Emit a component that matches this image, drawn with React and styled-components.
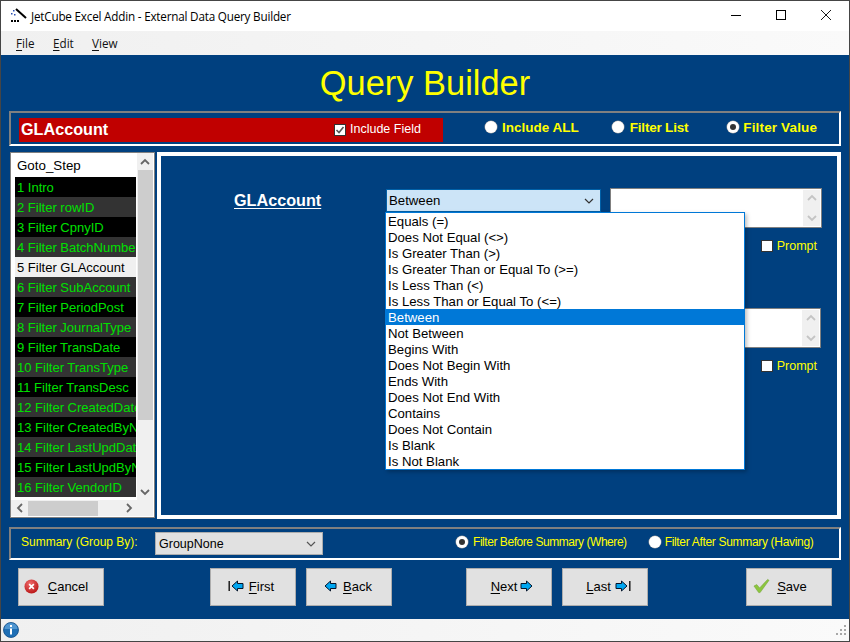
import React from "react";
import styled, { createGlobalStyle } from "styled-components";

const GlobalStyle = createGlobalStyle`
  html, body {
    margin: 0;
    padding: 0;
    background: #fff;
  }
`;

const Window = styled.div`
  width: 850px;
  height: 642px;
  box-sizing: border-box;
  border: 1px solid #454545;
  display: flex;
  flex-direction: column;
  overflow: hidden;
  font-family: "Liberation Sans", Arial, sans-serif;
`;

const TitleBar = styled.div`
  height: 30px;
  flex: none;
  background: #fff;
  display: flex;
  align-items: center;
  padding: 0 1px 0 8px;
  font-family: "Open Sans", sans-serif;
  font-size: 11.7px;
  color: #000;
`;

const TitleText = styled.span`
  margin-left: 4px;
  flex: 1;
  letter-spacing: -0.2px;
`;

const WinButton = styled.div`
  width: 45px;
  height: 30px;
  padding-bottom: 2px;
  box-sizing: border-box;
  display: flex;
  align-items: center;
  justify-content: center;
`;

const MenuBar = styled.div`
  height: 24px;
  flex: none;
  background: linear-gradient(90deg, #f0f0f0, #fafafa);
  display: flex;
  align-items: center;
  padding-left: 15px;
  font-family: "Open Sans", sans-serif;
  font-size: 11.7px;
  color: #111;
`;

const MenuItem = styled.span`
  width: ${(p) => p.$w}px;
  u {
    text-underline-offset: 2px;
  }
`;

const Body = styled.div`
  flex: 1;
  background: #00407f;
  padding: 0 8px;
  display: flex;
  flex-direction: column;
`;

const Heading = styled.h1`
  margin: 0;
  height: 56px;
  flex: none;
  display: flex;
  align-items: center;
  justify-content: center;
  color: #ffff00;
  font-size: 34.4px;
  font-weight: 400;
  padding-top: 1px;
  box-sizing: border-box;
`;

const GroupBox = styled.div`
  box-sizing: border-box;
  flex: none;
  height: ${(p) => p.$h}px;
  width: 832px;
  border-style: solid;
  border-width: 2px;
  border-color: #808080 #fff #fff #808080;
  display: flex;
  align-items: center;
`;

const FieldBar = styled(GroupBox)`
  padding-left: 8px;
`;

const RedBand = styled.div`
  width: 424px;
  height: 24px;
  margin-top: 2px;
  background: #c00000;
  display: flex;
  align-items: center;
  padding-left: 2px;
  box-sizing: border-box;
  color: #fff;
`;

const FieldName = styled.span`
  font-size: 16.2px;
  font-weight: 700;
  width: 313px;
`;

const CheckBox = styled.span`
  width: 12px;
  height: 12px;
  box-sizing: border-box;
  border: 1px solid #333;
  background: #fff;
  flex: none;
  display: inline-flex;
  align-items: center;
  justify-content: center;
`;

const IncludeLabel = styled.span`
  font-size: 12.5px;
  margin-left: 4px;
  margin-top: -1px;
`;

const RadioDot = styled.span`
  width: 12px;
  height: 12px;
  border-radius: 50%;
  background: #fff;
  box-shadow: 0 0 0 0.5px #999;
  flex: none;
  display: inline-flex;
  align-items: center;
  justify-content: center;
  &::after {
    content: "";
    width: 6px;
    height: 6px;
    border-radius: 50%;
    background: ${(p) => (p.$on ? "#333" : "transparent")};
  }
`;

const RadioOption = styled.label`
  display: flex;
  align-items: center;
  flex: none;
  white-space: nowrap;
  color: #ffff00;
  font-size: ${(p) => (p.$big ? "13.5px" : "12px")};
  font-weight: ${(p) => (p.$big ? 700 : 400)};
  margin-left: ${(p) => p.$left}px;
  margin-top: ${(p) => (p.$big ? "-3px" : "-4px")};
  letter-spacing: ${(p) => p.$track || 0}px;
  span + span {
    margin-left: ${(p) => p.$gap}px;
  }
`;

const MainRow = styled.div`
  display: flex;
  align-items: flex-start;
  height: 366px;
  flex: none;
  margin-top: 6px;
  margin-left: 1px;
  gap: 2px;
`;

const ListBox = styled.div`
  box-sizing: border-box;
  width: 145px;
  height: 366px;
  flex: none;
  background: #fff;
  border: 1px solid #111;
  outline: 1px solid #808080;
  outline-offset: -1px;
  padding: 0 1px 1px 0;
  display: grid;
  grid-template-columns: 126px 16px;
  grid-template-rows: 347px 16px;
`;

const ListInner = styled.div`
  grid-column: 1;
  grid-row: 1;
  overflow: hidden;
  font-size: 13.33px;
`;

const ListHeader = styled.div`
  height: 24px;
  line-height: 25px;
  padding-left: 6px;
  color: #000;
`;

const ListRow = styled.div`
  height: 20px;
  line-height: 22px;
  margin: 0 1px 0 4px;
  padding-left: 2px;
  font-size: 13px;
  white-space: nowrap;
  overflow: hidden;
  color: ${(p) => (p.$current ? "#000" : "#00e000")};
  background: ${(p) => (p.$current ? "#f0f0f0" : p.$alt ? "#333" : "#000")};
`;

const VScroll = styled.div`
  grid-column: 2;
  grid-row: 1;
  background: #f0f0f0;
  display: flex;
  flex-direction: column;
  align-items: center;
`;

const Thumb = styled.div`
  background: #cdcdcd;
  width: ${(p) => p.$w};
  height: ${(p) => p.$h};
  flex: none;
`;

const ArrowCell = styled.div`
  flex: none;
  width: ${(p) => p.$w || 16}px;
  height: ${(p) => p.$h || 17}px;
  display: flex;
  align-items: center;
  justify-content: center;
`;

const HScroll = styled.div`
  grid-column: 1 / 3;
  grid-row: 2;
  background: #f0f0f0;
  display: flex;
  align-items: center;
  padding-right: 16px;
`;

const Spacer = styled.div`
  flex: 1;
`;

const FormPanel = styled.div`
  box-sizing: border-box;
  width: 684px;
  height: 367px;
  flex: none;
  border: 4px solid #fff;
  background: #00407f;
  padding: 33px 16px 0 73px;
  display: flex;
  flex-direction: column;
`;

const FieldRow = styled.div`
  display: flex;
  align-items: flex-start;
`;

const FormLabel = styled.span`
  width: 152px;
  flex: none;
  color: #fff;
  font-size: 16.2px;
  font-weight: 700;
  text-decoration: underline;
  text-underline-offset: 2px;
  line-height: 22px;
`;

const ComboWrap = styled.div`
  position: relative;
  width: 215px;
  height: 23px;
  flex: none;
`;

const ActiveCombo = styled.div`
  box-sizing: border-box;
  height: 23px;
  background: #cce4f7;
  border: 1px solid #0060a8;
  display: flex;
  align-items: center;
  justify-content: space-between;
  padding: 0 6px 0 2px;
  font-size: 13.2px;
  color: #000;
`;

const DropList = styled.div`
  position: absolute;
  top: 23px;
  left: -1px;
  width: 360px;
  box-sizing: border-box;
  background: #fff;
  border: 1px solid #0078d7;
  box-shadow: 2px 2px 4px rgba(0, 0, 0, 0.25);
  z-index: 2;
`;

const DropItem = styled.div`
  height: 16px;
  line-height: 18px;
  padding-left: 2px;
  font-size: 13.2px;
  color: ${(p) => (p.$sel ? "#fff" : "#000")};
  background: ${(p) => (p.$sel ? "#0078d7" : "#fff")};
`;

const ValueBox = styled.div`
  box-sizing: border-box;
  width: 212px;
  height: 40px;
  flex: none;
  background: #fff;
  border: 1px solid #808080;
  margin-left: ${(p) => p.$left}px;
  margin-top: ${(p) => p.$top}px;
  padding: 1px;
  display: flex;
  justify-content: flex-end;
`;

const SpinBar = styled.div`
  width: 17px;
  background: #f0f0f0;
  display: flex;
  flex-direction: column;
  justify-content: space-between;
  align-items: center;
  padding: 3px 0;
`;

const PromptRow = styled.div`
  display: flex;
  align-items: center;
  justify-content: flex-end;
  margin: 11px 4px 0 0;
  height: 14px;
  color: #ffff00;
  font-size: 12.5px;
`;

const PromptLabel = styled.span`
  margin-left: 4px;
`;

const SecondRow = styled.div`
  display: flex;
  justify-content: flex-end;
`;

const SummaryBar = styled(GroupBox)`
  margin-top: 9px;
  padding-left: 10px;
`;

const SummaryLabel = styled.span`
  width: 134px;
  flex: none;
  color: #ffff00;
  font-size: 12px;
  margin-top: -4px;
`;

const SummarySelect = styled.div`
  box-sizing: border-box;
  width: 168px;
  height: 23px;
  flex: none;
  background: #e1e1e1;
  border: 1px solid #adadad;
  display: flex;
  align-items: center;
  justify-content: space-between;
  padding: 0 6px 0 3px;
  font-size: 12.5px;
  color: #000;
`;

const ButtonRow = styled.div`
  display: flex;
  margin-top: 8px;
  padding-left: 9px;
  gap: 10px;
`;

const ActionButton = styled.button`
  box-sizing: border-box;
  width: 86px;
  height: 38px;
  margin-left: ${(p) => p.$left || 0}px;
  background: #e1e1e1;
  border: 1px solid #adadad;
  font-family: inherit;
  font-size: 13px;
  color: #000;
  padding: 0 ${(p) => p.$insetR || 0}px 2px ${(p) => p.$insetL || 0}px;
  display: flex;
  align-items: center;
  justify-content: center;
  gap: ${(p) => p.$gap ?? 3}px;
  u {
    text-underline-offset: 2px;
  }
`;

const StatusBar = styled.div`
  height: 22px;
  flex: none;
  background: linear-gradient(90deg, #f0f0f0, #fafafa);
  display: flex;
  align-items: center;
  justify-content: space-between;
  padding: 0 2px 0 2px;
`;

const Chevron = ({ dir = "down", color = "#555", size = 10, weight = 1.8 }) => {
  const pts = {
    up: "1,7 5,3 9,7",
    down: "1,3 5,7 9,3",
    left: "7,1 3,5 7,9",
    right: "3,1 7,5 3,9",
  }[dir];
  return (
    <svg width={size} height={size} viewBox="0 0 10 10">
      <polyline points={pts} fill="none" stroke={color} strokeWidth={weight} />
    </svg>
  );
};

const BlueArrow = ({ flip, bar }) => (
  <svg width={bar ? 16 : 13} height="12" viewBox={bar ? "0 0 16 12" : "0 0 13 12"} style={flip ? { transform: "scaleX(-1)" } : undefined}>
    <path d="M1 6 L6.5 1 V3.5 H12 V8.5 H6.5 V11 Z" fill="#00a6f0" stroke="#06142a" strokeWidth="1" transform={bar ? "translate(3 0)" : undefined} />
    {bar && <rect x="0.5" y="1" width="1.4" height="10" fill="#111" />}
  </svg>
);

const AppIcon = () => (
  <svg width="18" height="18" viewBox="0 0 18 18">
    <path d="M7 2 L17 11" stroke="#000" strokeWidth="2" />
    <rect x="4" y="3" width="1.5" height="1.5" fill="#2a4fb0" />
    <rect x="2" y="6" width="1.5" height="1.5" fill="#2a4fb0" />
    <rect x="5" y="7" width="1.5" height="1.5" fill="#2a4fb0" />
    <rect x="2" y="13" width="2" height="2" fill="#000" />
    <rect x="5" y="13" width="2" height="2" fill="#000" />
    <rect x="8" y="13" width="2" height="2" fill="#000" />
  </svg>
);

const CancelIcon = () => (
  <svg width="15" height="15" viewBox="0 0 16 16">
    <defs>
      <radialGradient id="cancelGrad" cx="0.4" cy="0.3" r="0.8">
        <stop offset="0" stopColor="#f06a6a" />
        <stop offset="1" stopColor="#b30d0d" />
      </radialGradient>
    </defs>
    <circle cx="8" cy="8" r="7.5" fill="url(#cancelGrad)" />
    <path d="M5.5 5.5 L10.5 10.5 M10.5 5.5 L5.5 10.5" stroke="#fff" strokeWidth="1.8" />
  </svg>
);

const SaveIcon = () => (
  <svg width="17" height="16" viewBox="0 0 18 16">
    <path d="M1 8 L4 6.5 L7 10 L15.5 1 L17 2 L7.5 15 L6 15 Z" fill="#8cc63f" stroke="#6c9c2a" strokeWidth="0.5" />
  </svg>
);

const InfoIcon = () => (
  <svg width="16" height="16" viewBox="0 0 16 16">
    <circle cx="8" cy="8" r="7.5" fill="#1f6fb5" stroke="#0d4a85" strokeWidth="0.8" />
    <path d="M1.5 7 A6.5 6 0 0 1 14.5 7 Z" fill="#6fb0e4" opacity="0.6" />
    <rect x="7" y="3" width="2" height="2" fill="#fff" />
    <rect x="7" y="6.5" width="2" height="6" fill="#fff" />
  </svg>
);

const Grip = () => (
  <svg width="12" height="12" viewBox="0 0 12 12">
    {[[9, 1], [5, 5], [9, 5], [1, 9], [5, 9], [9, 9]].map(([x, y]) => (
      <rect key={`${x}-${y}`} x={x} y={y} width="2" height="2" fill="#a8a8a8" />
    ))}
  </svg>
);

const steps = [
  "1 Intro",
  "2 Filter rowID",
  "3 Filter CpnyID",
  "4 Filter BatchNumber",
  "5 Filter GLAccount",
  "6 Filter SubAccount",
  "7 Filter PeriodPost",
  "8 Filter JournalType",
  "9 Filter TransDate",
  "10 Filter TransType",
  "11 Filter TransDesc",
  "12 Filter CreatedDate",
  "13 Filter CreatedByName",
  "14 Filter LastUpdDate",
  "15 Filter LastUpdByName",
  "16 Filter VendorID",
];

const operators = [
  "Equals (=)",
  "Does Not Equal (<>)",
  "Is Greater Than (>)",
  "Is Greater Than or Equal To (>=)",
  "Is Less Than (<)",
  "Is Less Than or Equal To (<=)",
  "Between",
  "Not Between",
  "Begins With",
  "Does Not Begin With",
  "Ends With",
  "Does Not End With",
  "Contains",
  "Does Not Contain",
  "Is Blank",
  "Is Not Blank",
];

function Spin() {
  return (
    <SpinBar>
      <Chevron dir="up" color="#c4c4c4" />
      <Chevron dir="down" color="#c4c4c4" />
    </SpinBar>
  );
}

export default function App() {
  return (
    <>
      <GlobalStyle />
      <Window>
        <TitleBar>
          <AppIcon />
          <TitleText>JetCube Excel Addin - External Data Query Builder</TitleText>
          <WinButton>
            <svg width="10" height="10" viewBox="0 0 10 10"><path d="M0 5.5 H10" stroke="#000" /></svg>
          </WinButton>
          <WinButton>
            <svg width="10" height="10" viewBox="0 0 10 10"><rect x="0.5" y="0.5" width="9" height="9" fill="none" stroke="#000" /></svg>
          </WinButton>
          <WinButton>
            <svg width="10" height="10" viewBox="0 0 10 10"><path d="M0 0 L10 10 M10 0 L0 10" stroke="#000" strokeWidth="0.9" /></svg>
          </WinButton>
        </TitleBar>
        <MenuBar>
          <MenuItem $w={37}><u>F</u>ile</MenuItem>
          <MenuItem $w={39}><u>E</u>dit</MenuItem>
          <MenuItem $w={40}><u>V</u>iew</MenuItem>
        </MenuBar>
        <Body>
          <Heading>Query Builder</Heading>
          <FieldBar $h={35}>
            <RedBand>
              <FieldName>GLAccount</FieldName>
              <CheckBox>
                <svg width="10" height="10" viewBox="0 0 10 10">
                  <path d="M1.5 5 L4 7.5 L8.5 2" fill="none" stroke="#555" strokeWidth="1.6" />
                </svg>
              </CheckBox>
              <IncludeLabel>Include Field</IncludeLabel>
            </RedBand>
            <RadioOption $big $left={42} $gap={5}>
              <RadioDot /><span>Include ALL</span>
            </RadioOption>
            <RadioOption $big $left={33} $gap={6} $track={-0.2}>
              <RadioDot /><span>Filter List</span>
            </RadioOption>
            <RadioOption $big $left={39} $gap={4} $track={0.15}>
              <RadioDot $on /><span>Filter Value</span>
            </RadioOption>
          </FieldBar>
          <MainRow>
            <ListBox>
              <ListInner>
                <ListHeader>Goto_Step</ListHeader>
                {steps.map((s, i) => (
                  <ListRow key={s} $alt={i % 2 === 1} $current={i === 4}>{s}</ListRow>
                ))}
              </ListInner>
              <VScroll>
                <ArrowCell><Chevron dir="up" color="#666" /></ArrowCell>
                <Thumb $w="15px" $h="250px" />
                <Spacer />
                <ArrowCell><Chevron dir="down" color="#666" /></ArrowCell>
              </VScroll>
              <HScroll>
                <ArrowCell $w={17}><Chevron dir="left" color="#666" /></ArrowCell>
                <Thumb $w="70px" $h="15px" />
                <Spacer />
                <ArrowCell $w={17}><Chevron dir="right" color="#666" /></ArrowCell>
              </HScroll>
            </ListBox>
            <FormPanel>
              <FieldRow>
                <FormLabel>GLAccount</FormLabel>
                <ComboWrap>
                  <ActiveCombo>
                    Between
                    <Chevron color="#333" weight={1.2} />
                  </ActiveCombo>
                  <DropList>
                    {operators.map((op) => (
                      <DropItem key={op} $sel={op === "Between"}>{op}</DropItem>
                    ))}
                  </DropList>
                </ComboWrap>
                <ValueBox $left={9} $top={-1}><Spin /></ValueBox>
              </FieldRow>
              <PromptRow>
                <CheckBox />
                <PromptLabel>Prompt</PromptLabel>
              </PromptRow>
              <SecondRow>
                <ValueBox $left={0} $top={55}><Spin /></ValueBox>
              </SecondRow>
              <PromptRow>
                <CheckBox />
                <PromptLabel>Prompt</PromptLabel>
              </PromptRow>
            </FormPanel>
          </MainRow>
          <SummaryBar $h={33}>
            <SummaryLabel>Summary (Group By):</SummaryLabel>
            <SummarySelect>
              GroupNone
              <Chevron color="#555" weight={1.2} />
            </SummarySelect>
            <RadioOption $left={133} $gap={5} $track={-0.45}>
              <RadioDot $on /><span>Filter Before Summary (Where)</span>
            </RadioOption>
            <RadioOption $left={22} $gap={4} $track={-0.32}>
              <RadioDot /><span>Filter After Summary (Having)</span>
            </RadioOption>
          </SummaryBar>
          <ButtonRow>
            <ActionButton $gap={9} $insetR={10}><CancelIcon /><span><u>C</u>ancel</span></ActionButton>
            <ActionButton $left={96} $gap={5} $insetR={4}><BlueArrow bar /><span><u>F</u>irst</span></ActionButton>
            <ActionButton $gap={6} $insetR={2}><BlueArrow /><span><u>B</u>ack</span></ActionButton>
            <ActionButton $left={64} $insetL={6}><span><u>N</u>ext</span><BlueArrow flip /></ActionButton>
            <ActionButton $gap={4} $insetL={7}><span><u>L</u>ast</span><BlueArrow flip bar /></ActionButton>
            <ActionButton $left={88} $gap={7} $insetR={18}><SaveIcon /><span><u>S</u>ave</span></ActionButton>
          </ButtonRow>
        </Body>
        <StatusBar>
          <InfoIcon />
          <Grip />
        </StatusBar>
      </Window>
    </>
  );
}
